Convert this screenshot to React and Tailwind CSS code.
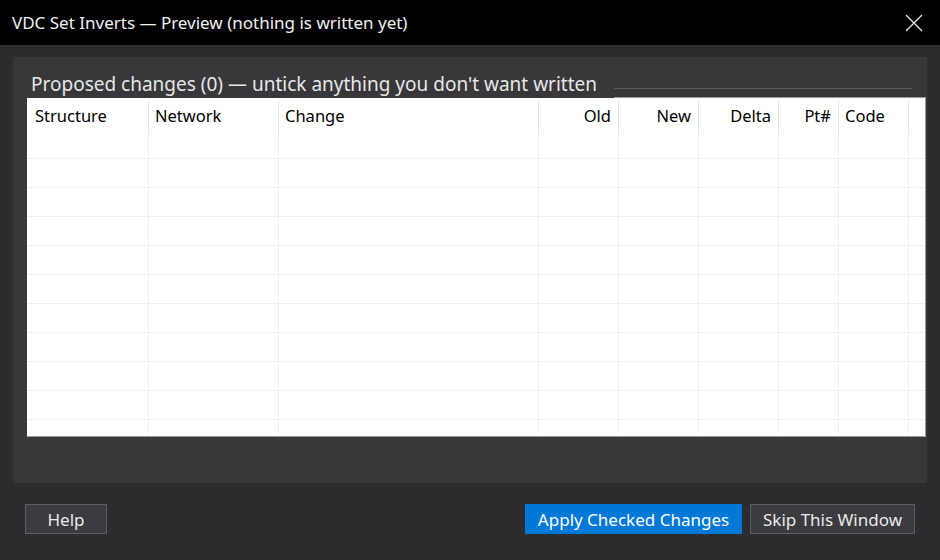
import React from "react";

const cols = [
  { name: "Structure", w: "w-[122px]", align: "text-left pl-[8px]" },
  { name: "Network", w: "w-[130px]", align: "text-left pl-[6px]" },
  { name: "Change", w: "w-[260px]", align: "text-left pl-[6px]" },
  { name: "Old", w: "w-[80px]", align: "text-right pr-[7px]" },
  { name: "New", w: "w-[80px]", align: "text-right pr-[7px]" },
  { name: "Delta", w: "w-[80px]", align: "text-right pr-[7px]" },
  { name: "Pt#", w: "w-[60px]", align: "text-right pr-[7px]" },
  { name: "Code", w: "w-[70px]", align: "text-left pl-[6px]" },
];

function Row({ h }) {
  return (
    <div className={`flex ${h} border-b border-[#efefef] shrink-0`}>
      {cols.map((c) => (
        <div key={c.name} className={`${c.w} shrink-0 border-r border-[#efefef]`} />
      ))}
      <div className="flex-1" />
    </div>
  );
}

export default function App() {
  const rows = Array.from({ length: 9 });
  return (
    <div className="w-[940px] h-[560px] bg-[#2d2d30] flex flex-col font-['Segoe_UI','Noto_Sans',sans-serif] text-[#f0f0f0] overflow-hidden">
      <div className="h-[45px] bg-black flex items-center justify-between pl-[12px] pr-[17px] shrink-0">
        <span className="text-[17px] leading-none">VDC Set Inverts — Preview (nothing is written yet)</span>
        <svg width="18" height="18" viewBox="0 0 18 18" className="text-[#e8e8e8]">
          <path d="M1 1 L17 17 M17 1 L1 17" stroke="currentColor" strokeWidth="1.3" fill="none" />
        </svg>
      </div>
      <div className="flex-1 flex flex-col pl-[13px] pr-[13px] pt-[12px]">
        <div className="h-[426px] bg-[#38383b] flex flex-col pl-[14px] pr-px pt-[13px]">
          <div className="flex h-[28px] items-stretch relative z-10">
            <div className="bg-[#38383b] pl-[4px] pr-[17px] text-[19px] leading-[28px] text-[#e6e6e6] whitespace-nowrap">
              Proposed changes (0) — untick anything you don't want written
            </div>
            <div className="flex-1 mr-[14px] mt-[18px] h-px bg-[#5a5a5c]" />
          </div>
          <div className="h-[340px] -mt-px bg-white border-t border-r border-b border-[#9a9a9a] flex flex-col overflow-hidden">
            <div className="flex h-[33px] shrink-0 pt-[3px]">
              {cols.map((c) => (
                <div
                  key={c.name}
                  className={`${c.w} shrink-0 border-r border-[#e3e3e3] ${c.align} text-[16.5px] leading-[29px] text-black`}
                >
                  {c.name}
                </div>
              ))}
              <div className="flex-1" />
            </div>
            <Row h="h-[28px]" />
            {rows.map((_, i) => (
              <Row key={i} h="h-[29px]" />
            ))}
            <div className="flex flex-1">
              {cols.map((c) => (
                <div key={c.name} className={`${c.w} shrink-0 border-r border-[#efefef] mb-[2px]`} />
              ))}
              <div className="flex-1" />
            </div>
          </div>
        </div>
        <div className="flex items-center pt-[21px] pl-[12px] pr-[12px]">
          <button className="w-[82px] h-[30px] bg-[#3c3c40] border border-[#5e5e62] text-[17px] text-[#e8e8e8] leading-none">
            Help
          </button>
          <div className="flex-1" />
          <button className="w-[217px] h-[30px] bg-[#0078d7] text-[17px] text-white leading-none">
            Apply Checked Changes
          </button>
          <button className="ml-[8px] w-[165px] h-[30px] bg-[#3c3c40] border border-[#5e5e62] text-[17px] text-[#e8e8e8] leading-none">
            Skip This Window
          </button>
        </div>
      </div>
    </div>
  );
}
